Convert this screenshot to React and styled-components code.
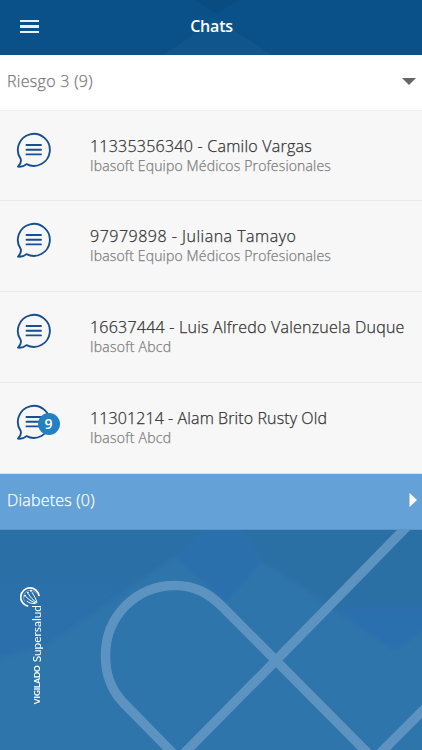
import React from 'react';
import styled, { createGlobalStyle } from "styled-components";

const GlobalStyle = createGlobalStyle`
    * {
        box-sizing:border-box;
    }
    body {
        margin:0;
        font-family:"Open Sans", "Noto Sans", sans-serif;
    }
`

const Page = styled.div`
    display:flex;
    flex-direction:column;
    width:100%;
    height:750px;
    overflow:hidden;
    background-color:#2f74ab;
`

const Header = styled.header`
    display:grid;
    grid-template-columns:58px 1fr 58px;
    align-items:center;
    flex:none;
    height:55px;
    background:#0a5089;
    position:relative;
`

const HeaderPattern = styled.svg`
    position:absolute;
    top:0;
    left:0;
`

const MenuButton = styled.button`
    display:flex;
    flex-direction:column;
    gap:3px;
    width:19px;
    margin:-2px 0 0 20px;
    padding:0;
    border:0;
    background:none;
    position:relative;
`

const MenuBar = styled.span`
    height:2.5px;
    width:100%;
    background-color:#e9f2f8;
`

const Title = styled.h1`
    margin:0;
    padding:0 0 4px 1px;
    text-align:center;
    font-size:16px;
    line-height:24px;
    font-weight:600;
    letter-spacing:-0.2px;
    color:#ffffff;
    position:relative;
`

const Section = styled.div`
    display:flex;
    justify-content:space-between;
    align-items:center;
    flex:none;
    height:55.5px;
    padding:0 ${props => props.$open ? 6 : 5}px 3px 7px;
    background-color:${props => props.$open ? "#ffffff" : "#64a1d6"};
    color:${props => props.$open ? "#777777" : "#ffffff"};
    border-bottom:1px solid ${props => props.$open ? "#eeeeee" : "#5795ca"};
    box-shadow:${props => props.$open ? "none" : "0 1px 2px #1c527e"};
    position:relative;
`

const SectionName = styled.span`
    font-size:16px;
    line-height:22px;
    font-weight:300;
    -webkit-text-stroke:0.25px currentColor;
    letter-spacing:${props => props.$spacing}px;
`

const Row = styled.div`
    display:flex;
    flex:none;
    height:90.9px;
    padding:21px 0 0 16px;
    background-color:#f7f7f7;
    border-bottom:1px solid #f0e7ea;
`

const IconBox = styled.div`
    position:relative;
    width:74px;
    height:36px;
`

const Badge = styled.span`
    position:absolute;
    left:21.5px;
    top:9px;
    width:22px;
    height:22px;
    border-radius:50%;
    background-color:#2380c5;
    color:#ffffff;
    font-size:14px;
    line-height:21px;
    font-weight:600;
    text-align:center;
`

const Texts = styled.div`
    padding-top:4px;
    white-space:nowrap;
    font-weight:300;
    -webkit-text-stroke:0.25px currentColor;
`

const Name = styled.div`
    font-size:16px;
    line-height:20px;
    letter-spacing:${props => props.$spacing}px;
    color:#333333;
`

const Team = styled.div`
    font-size:14px;
    line-height:19px;
    letter-spacing:${props => props.$spacing}px;
    color:#7c7c7c;
`

const Footer = styled.footer`
    flex:1;
    position:relative;
    overflow:hidden;
`

const Pattern = styled.svg`
    display:block;
`

const Seal = styled.div`
    position:absolute;
    left:19px;
    top:55px;
    display:flex;
    flex-direction:column;
    color:#ffffff;
`

const SealText = styled.div`
    margin:-3px 0 0 11px;
    writing-mode:vertical-rl;
    transform:rotate(180deg);
    font-family:Lato, sans-serif;
    font-size:11.9px;
    line-height:13px;
    white-space:nowrap;

    b {
        font-size:8.2px;
        font-weight:900;
        letter-spacing:-0.1px;
    }
`

const chats = [
    { name: "11335356340 - Camilo Vargas", team: "Ibasoft Equipo Médicos Profesionales", spacing: 0.24, teamSpacing: 0.16 },
    { name: "97979898 - Juliana Tamayo", team: "Ibasoft Equipo Médicos Profesionales", spacing: 0.5, teamSpacing: 0.16 },
    { name: "16637444 - Luis Alfredo Valenzuela Duque", team: "Ibasoft Abcd", spacing: 0.23, teamSpacing: 0.25 },
    { name: "11301214 - Alam Brito Rusty Old", team: "Ibasoft Abcd", spacing: 0.1, teamSpacing: 0.25, count: 9 },
];

function ChatIcon() {
    return (
        <svg width="36" height="36" viewBox="0 0 36 36" fill="none" stroke="#174f91" strokeWidth="1.9" strokeLinecap="round" strokeLinejoin="round">
            <path d="M4.7 27A16 16 0 1 1 10.500 32.1C8 34.4 5.3 35 2 34.6C4.2 32.5 5.6 30.2 4.700 27Z" />
            <path d="M10.500 13H25M10.500 17.700H25M10.500 22.400H25" />
        </svg>
    );
}

function SealLogo() {
    return (
        <svg width="22" height="23" viewBox="0 0 22 23" fill="none" stroke="#ffffff" strokeLinecap="round">
            <path d="M20 10.5A9.2 9.2 0 1 0 8.5 21" strokeWidth="1.7" />
            <path d="M17.3 8.3A7 7 0 0 0 5.6 16.3" strokeWidth="0.6" opacity="0.6" />
            <path d="M17 18C13.5 17 10 15 7 11.8M17.5 17.5C14 15 11 12 9.7 9.3M18 17C16.8 13.5 14.8 10.3 13.3 7.6M16 18.5C13 18.7 10.2 18 8 16.3" strokeWidth="1" />
            <path d="M6 10.8h.1M8.8 7.7h.1M12 5.8h.1" strokeWidth="1.9" />
        </svg>
    );
}

export default function App() {
    return (
        <Page>
            <GlobalStyle />
            <Header>
                <HeaderPattern width="422" height="55">
                    <path d="M195 0H238L217 14Z" fill="#094c82" />
                    <path d="M163 55L217 19L272 55Z" fill="#10568c" />
                </HeaderPattern>
                <MenuButton aria-label="Menú">
                    <MenuBar />
                    <MenuBar />
                    <MenuBar />
                </MenuButton>
                <Title>Chats</Title>
            </Header>

            <Section $open>
                <SectionName $spacing={0.3}>Riesgo 3 (9)</SectionName>
                <svg width="14" height="8"><path d="M0 1H14L7 8Z" fill="#666666" /></svg>
            </Section>

            {chats.map(chat => (
                <Row key={chat.name}>
                    <IconBox>
                        <ChatIcon />
                        {chat.count && <Badge>{chat.count}</Badge>}
                    </IconBox>
                    <Texts>
                        <Name $spacing={chat.spacing}>{chat.name}</Name>
                        <Team $spacing={chat.teamSpacing}>{chat.team}</Team>
                    </Texts>
                </Row>
            ))}

            <Section>
                <SectionName $spacing={0.2}>Diabetes (0)</SectionName>
                <svg width="8" height="14"><path d="M0.5 0L8 7L0.5 14Z" fill="#ffffff" /></svg>
            </Section>

            <Footer>
                <Pattern width="422" height="221" viewBox="0 529.600 422 221">
                    <defs>
                        <linearGradient id="shade" x1="0" y1="0" x2="0" y2="1">
                            <stop offset="0" stopColor="#2a70a5" />
                            <stop offset="0.5" stopColor="#2b70ac" />
                            <stop offset="1" stopColor="#2f75ad" />
                        </linearGradient>
                        <filter id="soft">
                            <feGaussianBlur stdDeviation="2" />
                        </filter>
                    </defs>
                    <rect y="529" width="422" height="222" fill="url(#shade)" />
                    <g filter="url(#soft)">
                        <path d="M45 646L175 556L220 590L262 560L395 650L430 622V760H-10V660Z" fill="#2f74ab" />
                        <path d="M175 556L210 524H236L262 560L226 601Z" fill="#2970ad" />
                        <path d="M236 524H430V608H334L262 560Z" fill="#2970a5" />
                        <path d="M334 608H430V622L395 650Z" fill="#296fae" />
                    </g>
                    <g fill="none" stroke="#5c93c0" strokeWidth="9.5">
                        <path d="M373 758L223 607C209 593 195 585 175 585C136 585 105.500 616 105.500 655C105.500 675 111 689 123 702L178 758" />
                        <path d="M408 525L276 660L180 757M428 705L374 759" />
                    </g>
                </Pattern>
                <Seal>
                    <SealLogo />
                    <SealText><b>VIGILADO</b> Supersalud</SealText>
                </Seal>
            </Footer>
        </Page>
    );
}
